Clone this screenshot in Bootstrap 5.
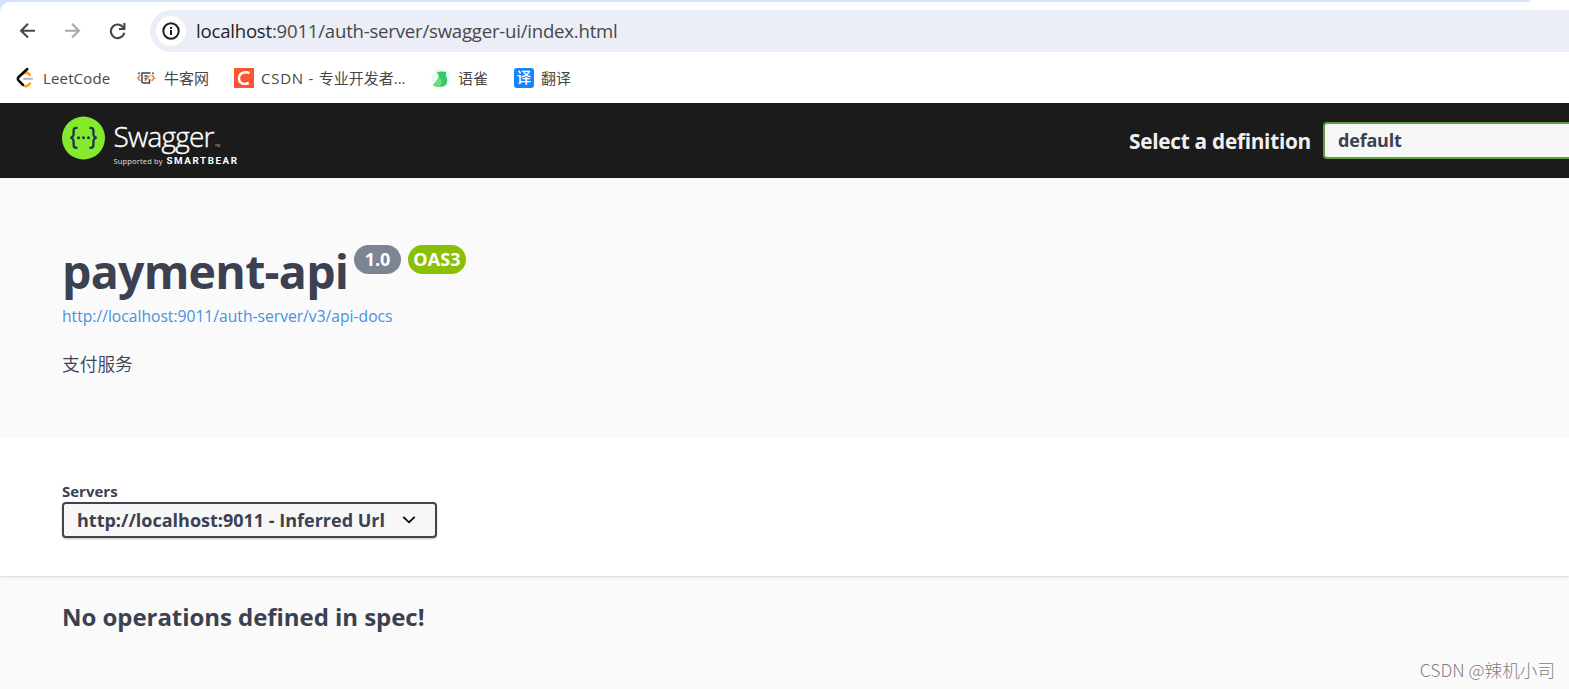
<!DOCTYPE html>
<html lang="en">
<head>
    <meta charset="UTF-8">
    <meta name="viewport" content="width=device-width, initial-scale=1.0">
    <title>Swagger UI</title>
    <link rel="stylesheet" href="https://cdn.jsdelivr.net/npm/bootstrap@5.3.0/dist/css/bootstrap.min.css">
    <style>
        body { width: 1569px; height: 689px; overflow: hidden; background: #fafafa; color: #3b4151; font-family: "Open Sans", "Noto Sans CJK SC", sans-serif; line-height: 1; }
        svg { display: block; flex: none; }
        .text-line { white-space: nowrap; }

        /* Browser chrome */
        .browser-frame { height: 103px; background: linear-gradient(90deg, #d3e3fd 1528px, #fff 1532px); padding-top: 2px; }
        .browser-inner { height: 101px; background: #fff; border-top-left-radius: 10px; padding-top: 8px; }
        .address-row { height: 42px; padding-left: 19px; }
        .nav-icon { margin-right: 27px; }
        .address-bar { height: 42px; background: #ebeef7; border-radius: 21px 0 0 21px; padding-left: 6px; margin-left: -4px; }
        .site-info { width: 30px; height: 30px; background: #fff; }
        .address-text { font-size: 18.6px; letter-spacing: -.22px; color: #474747; margin-left: 10px; }
        .address-text b { font-weight: 400; color: #1f1f1f; }
        .bookmark-row { height: 51px; padding: 1px 0 0 16px; color: #474747; font-size: 15px; }
        .bookmark-item { gap: 7px; }
        .bm-leetcode { width: 120px; letter-spacing: .15px; }
        .bm-nowcoder { width: 98px; gap: 8px; }
        .bm-csdn { width: 197px; }
        .bm-csdn i { font-style: normal; letter-spacing: .75px; }
        .bm-yuque { width: 83px; }

        /* Swagger top bar */
        .swagger-bar { height: 75px; background: #1b1b1b; box-shadow: inset 0 -1px 0 #151515; padding-left: 62px; }
        .definition-label { color: #f0f0f0; font-size: 20.8px; font-weight: 700; letter-spacing: -.28px; padding-top: 2px; }
        .definition-select { width: 246px; height: 37px; background: #f7f7f7; border: 2px solid #62a03f; border-right: 0; border-radius: 4px 0 0 4px; padding: 0 0 2px 13px; font-size: 18px; font-weight: 700; margin-left: 12px; letter-spacing: -.2px; }

        /* API info */
        .info-block { height: 260px; padding: 65px 0 0 62px; }
        .api-title { width: 285px; font-size: 46.5px; font-weight: 700; margin: 0; line-height: 56px; letter-spacing: -.75px; }
        .version-pill { height: 29px; border-radius: 29px; color: #fff; font-size: 18px; font-weight: 700; margin: 2px 0 0 7px; padding-bottom: 2px; }
        .pill-gray { width: 47px; background: #7d8492; }
        .pill-green { width: 58px; background: #89bf04; letter-spacing: .1px; }
        .docs-link { color: #4990e2; font-size: 15.65px; text-decoration: none; margin-top: 10px; }
        .api-desc { font-size: 17.7px; margin-top: 31px; font-weight: 350; }

        /* Servers */
        .scheme-block { height: 138px; background: #fff; box-shadow: 0 1px 2px rgba(0,0,0,.15); padding: 46px 0 0 62px; }
        .servers-label { font-size: 15px; font-weight: 700; height: 18px; line-height: 15px; }
        .servers-select { width: 375px; height: 36px; background: #f7f7f7; border: 2px solid #41444e; border-radius: 4px; box-shadow: 0 1px 2px rgba(0,0,0,.25); padding: 0 16px 0 13px; font-size: 18px; font-weight: 700; }
        .empty-title { font-size: 24px; font-weight: 700; padding: 27px 0 0 62px; margin: 0; letter-spacing: -.05px; }
        .watermark { right: 14px; bottom: 10px; font-family: "Noto Sans CJK SC", sans-serif; font-size: 17.6px; font-weight: 300; color: #808080; text-shadow: 1px 1px 0 #fff; }
    </style>
</head>
<body class="position-relative">
    <!-- Browser chrome -->
    <div class="browser-frame">
        <div class="browser-inner">
            <div class="address-row d-flex align-items-center">
                <svg class="nav-icon" width="18" height="18" viewBox="0 0 18 18" fill="none" stroke="#474747" stroke-width="2.1"><path d="M16 8.7H2.5M9 1.8 2.1 8.7 9 15.6"/></svg>
                <svg class="nav-icon" width="18" height="18" viewBox="0 0 18 18" fill="none" stroke="#a8a8a8" stroke-width="2.1"><path d="M1 8.7h13.5M8 1.8 14.9 8.7 8 15.6"/></svg>
                <svg class="nav-icon" width="18" height="18" viewBox="0 0 18 18" fill="none" stroke="#474747" stroke-width="2.1"><path d="M10 7H15.4V1M15 6.8A6.8 6.8 0 1 0 15.3 10.8"/></svg>
                <div class="address-bar d-flex align-items-center flex-grow-1">
                    <div class="site-info rounded-circle d-flex align-items-center justify-content-center">
                        <svg width="18" height="18" viewBox="0 0 18 18" fill="none" stroke="#1f1f1f" stroke-width="2"><circle cx="9" cy="9" r="7.7"/><path d="M9 8v5M9 5v2"/></svg>
                    </div>
                    <span class="address-text text-line"><b>localhost</b>:9011/auth-server/swagger-ui/index.html</span>
                </div>
            </div>
            <div class="bookmark-row d-flex align-items-center">
                <div class="bookmark-item bm-leetcode d-flex align-items-center">
                    <svg width="20" height="22" viewBox="0 0 20 22" fill="none" stroke-width="2.5" stroke-linecap="round">
                        <path d="M8 11.8h8" stroke="#b3b3b3" stroke-width="2"/>
                        <path d="M8 6.5c2-1.5 4-.8 5.8 1.4M14 16.5c-2.3 2.8-4.800 3.5-7 1.6" stroke="#ffa116"/>
                        <path d="M11.3 2 2.7 10c-1.2 1.2-1.2 2.5 0 3.7l4.2 4.2" stroke="#070706"/>
                    </svg>
                    <span class="text-line">LeetCode</span>
                </div>
                <div class="bookmark-item bm-nowcoder d-flex align-items-center">
                    <svg width="20" height="16" viewBox="0 0 20 16" fill="none" stroke-width="1.5">
                        <path d="M4.5 5 1.8 8l2.7 3M15.5 5l2.8 3-2.8 3M9 11l4.5-5.5" stroke="#f58a3c" stroke-width="1.8"/>
                        <path d="M2.5 2.5l1 1.5M17.5 2.5l-1 1.5M6 13V3h8.5M6.5 13h7V9M8.5 6h3M8.5 8.5h2" stroke="#39485a"/>
                    </svg>
                    <span class="text-line">牛客网</span>
                </div>
                <div class="bookmark-item bm-csdn d-flex align-items-center">
                    <svg width="20" height="20" viewBox="0 0 20 20" fill="none">
                        <path d="M0 0h20v20H0z" fill="#fc5531"/>
                        <path d="M15.5 5.2C11 3 5 4.5 5 10.5c0 5 4.5 6.4 9.8 4.5" stroke="#fff" stroke-width="2.4"/>
                    </svg>
                    <span class="text-line"><i>CSDN - </i>专业开发者...</span>
                </div>
                <div class="bookmark-item bm-yuque d-flex align-items-center">
                    <svg width="20" height="20" viewBox="0 0 20 20">
                        <circle cx="10" cy="10" r="9.7" fill="#eafaf1"/>
                        <path d="M5.5 4.2c3-1.2 7-.8 8.8-.2l1.500.2c-1.2 1-1.3 2.5-.4 4.5 2.3 5.5-.2 9.8-5.4 10-3.500.2-6.2 0-8.2-1.7C4.5 15 6 12 7.5 10 8.3 7.5 7.3 5.5 5.5 4.2z" fill="#36c66b"/>
                        <path d="M1.8 17C4.500 15 5.5 12 7.8 10c3.4 1 3.8 5 1.2 8.2-3 .8-5.500.2-7.2-1.2z" fill="#6fde7a"/>
                    </svg>
                    <span class="text-line">语雀</span>
                </div>
                <div class="bookmark-item d-flex align-items-center">
                    <svg width="20" height="20" viewBox="0 0 20 20" overflow="visible">
                        <rect width="20" height="20" rx="3" fill="#1585fb"/>
                        <text x="10" y="15.3" text-anchor="middle" font-size="14.5" font-weight="500" fill="#fff" font-family="Noto Sans CJK SC">译</text>
                    </svg>
                    <span class="text-line">翻译</span>
                </div>
            </div>
        </div>
    </div>

    <!-- Top bar -->
    <div class="swagger-bar d-flex align-items-center justify-content-between">
        <svg width="180" height="56" viewBox="0 0 180 56">
            <circle cx="21.5" cy="25" r="21.5" fill="#85ea2d"/>
            <g fill="none" stroke="#173647" stroke-width="2.3">
                <path d="M15.5 14.8c-3.4-.2-4 .8-3.9 3.4.1 3.3.3 6-3.2 6.5 3.5.6 3.3 3.2 3.2 6.5-.1 2.8.5 3.8 3.9 3.6"/>
                <path d="M27.5 14.8c3.4-.2 4 .8 3.9 3.4-.1 3.3-.3 6 3.2 6.5-3.5.6-3.3 3.2-3.2 6.5.1 2.8-.5 3.8-3.9 3.6"/>
            </g>
            <g fill="#173647"><circle cx="16.5" cy="24.7" r="1.5"/><circle cx="21.5" cy="24.7" r="1.5"/><circle cx="26.5" cy="24.7" r="1.5"/></g>
            <text x="51.5" y="33.5" font-size="28" font-weight="300" fill="#fff" stroke="#fff" stroke-width=".4" font-family="Open Sans" textLength="101">Swagger</text>
            <text x="153" y="34" font-size="3.5" fill="#ccc" font-family="Open Sans">TM</text>
            <text x="51.5" y="50.5" font-size="7.5" fill="#e0e0e0" font-family="Open Sans" textLength="49">Supported by</text>
            <text x="104.5" y="50.5" font-size="9.8" font-weight="700" fill="#fff" font-family="Roboto" textLength="70.5">SMARTBEAR</text>
        </svg>
        <div class="d-flex align-items-center">
            <span class="definition-label text-line">Select a definition</span>
            <div class="definition-select d-flex align-items-center">default</div>
        </div>
    </div>

    <!-- API info -->
    <div class="info-block">
        <div class="d-flex align-items-start">
            <h2 class="api-title text-line">payment-api</h2>
            <span class="version-pill pill-gray d-flex align-items-center justify-content-center">1.0</span>
            <span class="version-pill pill-green d-flex align-items-center justify-content-center">OAS3</span>
        </div>
        <div class="d-flex"><a class="docs-link text-line" href="#">http://localhost:9011/auth-server/v3/api-docs</a></div>
        <div class="api-desc">支付服务</div>
    </div>

    <!-- Server picker -->
    <div class="scheme-block">
        <div class="servers-label">Servers</div>
        <div class="servers-select d-flex align-items-center justify-content-between">
            <span class="text-line">http://localhost:9011 - Inferred Url</span>
            <svg width="20" height="20" viewBox="0 0 20 20" fill="none" stroke="#000" stroke-width="1.8"><path d="M4.3 6.8 10 12.3l5.7-5.5"/></svg>
        </div>
    </div>
    <h3 class="empty-title text-line">No operations defined in spec!</h3>
    <div class="watermark position-absolute text-line">CSDN @辣机小司</div>

    <script src="https://cdn.jsdelivr.net/npm/bootstrap@5.3.0/dist/js/bootstrap.bundle.min.js"></script>
</body>
</html>
